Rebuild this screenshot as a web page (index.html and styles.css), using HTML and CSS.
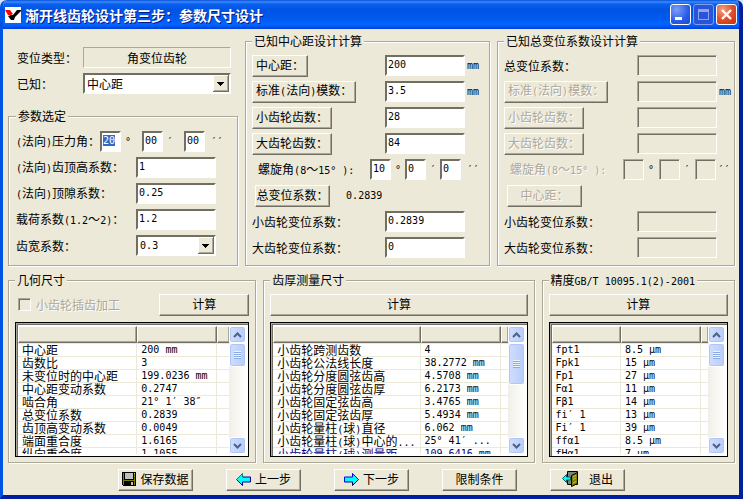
FILE: index.html
```html
<!DOCTYPE html>
<html lang="zh-CN">
<head>
    <meta charset="UTF-8">
    <meta name="viewport" content="width=device-width, initial-scale=1.0">
    <title>渐开线齿轮设计第三步：参数尺寸设计</title>
    <link rel="stylesheet" href="styles.css">
</head>
<body>
    <div class="window">
        <header class="titlebar">
            <svg class="logo" width="16" height="16" viewBox="0 0 16 16">
                <rect width="16" height="16" fill="#fff"/>
                <path d="M0 3h5l3 4-2 1H3z" fill="#f00"/>
                <path d="M3 9l3-1h2l4-5h4v1L10 10l-1 3H6z" fill="#000"/>
            </svg>
            <h1>渐开线齿轮设计第三步：参数尺寸设计</h1>
            <div class="window-buttons">
                <button type="button" class="win-btn" aria-label="最小化">
                    <svg width="19" height="19" viewBox="0 0 19 19"><path d="M4 12h7v3H4z" fill="#fff"/></svg>
                </button>
                <button type="button" class="win-btn dim" aria-label="最大化" disabled>
                    <svg width="19" height="19" viewBox="0 0 19 19"><path d="M4 4h11v11H4zM5 7h9v7H5z" fill="#8ba3f0" fill-rule="evenodd"/></svg>
                </button>
                <button type="button" class="win-btn close" aria-label="关闭">
                    <svg width="19" height="19" viewBox="0 0 19 19"><path d="M5 5l9 9M14 5l-9 9" stroke="#fff" stroke-width="2.4"/></svg>
                </button>
            </div>
        </header>

        <main class="client">
            <div class="top">
                <div class="left">
                    <div class="rows type-rows">
                        <div class="row">
                            <label for="shiftType">变位类型：</label>
                            <input type="text" id="shiftType" class="type" value="角变位齿轮" readonly>
                        </div>
                        <div class="row">
                            <label for="known">已知：</label>
                            <select id="known"><option>中心距</option></select>
                        </div>
                    </div>
                    <fieldset class="params">
                        <legend>参数选定</legend>
                        <div class="rows">
                            <div class="row angle">
                                <label for="pressure"><span class="num">(</span>法向<span class="num">)</span>压力角：</label>
                                <input type="text" id="pressure" class="small" value="20"><span class="unit">°</span>
                                <input type="text" class="small" value="00" aria-label="压力角 分"><span class="unit">′</span>
                                <input type="text" class="small" value="00" aria-label="压力角 秒"><span class="unit">′′</span>
                            </div>
                            <div class="row">
                                <label for="addendum"><span class="num">(</span>法向<span class="num">)</span>齿顶高系数：</label>
                                <input type="text" id="addendum" value="1">
                            </div>
                            <div class="row">
                                <label for="clearance"><span class="num">(</span>法向<span class="num">)</span>顶隙系数：</label>
                                <input type="text" id="clearance" value="0.25">
                            </div>
                            <div class="row">
                                <label for="load">载荷系数<span class="num">(1.2</span>～<span class="num">2)</span>：</label>
                                <input type="text" id="load" value="1.2">
                            </div>
                            <div class="row">
                                <label for="faceWidth">齿宽系数：</label>
                                <select id="faceWidth" class="num"><option>0.3</option></select>
                            </div>
                        </div>
                    </fieldset>
                </div>

                <fieldset class="center">
                    <legend>已知中心距设计计算</legend>
                    <div class="rows">
                        <div class="row">
                            <button type="button">中心距：</button>
                            <input type="text" value="200" aria-label="中心距"><span class="unit">mm</span>
                        </div>
                        <div class="row">
                            <button type="button">标准<span class="num">(</span>法向<span class="num">)</span>模数：</button>
                            <input type="text" value="3.5" aria-label="模数"><span class="unit">mm</span>
                        </div>
                        <div class="row">
                            <button type="button">小齿轮齿数：</button>
                            <input type="text" value="28" aria-label="小齿轮齿数">
                        </div>
                        <div class="row">
                            <button type="button">大齿轮齿数：</button>
                            <input type="text" value="84" aria-label="大齿轮齿数">
                        </div>
                        <div class="row angle">
                            <label for="helix" class="indent">螺旋角<span class="num">(8</span>～<span class="num">15° ):</span></label>
                            <input type="text" id="helix" class="small" value="10"><span class="unit">°</span>
                            <input type="text" class="small" value="0" aria-label="螺旋角 分"><span class="unit">′</span>
                            <input type="text" class="small" value="0" aria-label="螺旋角 秒"><span class="unit">′′</span>
                        </div>
                        <div class="row total">
                            <button type="button">总变位系数：</button>
                            <output class="num">0.2839</output>
                        </div>
                        <div class="row">
                            <label for="x1">小齿轮变位系数：</label>
                            <input type="text" id="x1" value="0.2839">
                        </div>
                        <div class="row">
                            <label for="x2">大齿轮变位系数：</label>
                            <input type="text" id="x2" value="0">
                        </div>
                    </div>
                </fieldset>

                <fieldset class="sum">
                    <legend>已知总变位系数设计计算</legend>
                    <div class="rows">
                        <div class="row">
                            <label for="sumX">总变位系数：</label>
                            <input type="text" id="sumX" disabled>
                        </div>
                        <div class="row">
                            <button type="button" disabled>标准<span class="num">(</span>法向<span class="num">)</span>模数：</button>
                            <input type="text" aria-label="模数" disabled><span class="unit">mm</span>
                        </div>
                        <div class="row">
                            <button type="button" disabled>小齿轮齿数：</button>
                            <input type="text" aria-label="小齿轮齿数" disabled>
                        </div>
                        <div class="row">
                            <button type="button" disabled>大齿轮齿数：</button>
                            <input type="text" aria-label="大齿轮齿数" disabled>
                        </div>
                        <div class="row angle">
                            <label for="sumHelix" class="indent off">螺旋角<span class="num">(8</span>～<span class="num">15° ):</span></label>
                            <input type="text" id="sumHelix" class="small" disabled><span class="unit">°</span>
                            <input type="text" class="small" aria-label="螺旋角 分" disabled><span class="unit">′</span>
                            <input type="text" class="small" aria-label="螺旋角 秒" disabled><span class="unit">′′</span>
                        </div>
                        <div class="row total">
                            <button type="button" disabled>中心距：</button>
                        </div>
                        <div class="row">
                            <label for="sumX1">小齿轮变位系数：</label>
                            <input type="text" id="sumX1" disabled>
                        </div>
                        <div class="row">
                            <label for="sumX2">大齿轮变位系数：</label>
                            <input type="text" id="sumX2" disabled>
                        </div>
                    </div>
                </fieldset>
            </div>

            <div class="results">
                <fieldset>
                    <legend>几何尺寸</legend>
                    <div class="actions">
                        <input type="checkbox" id="shaping" disabled>
                        <label for="shaping" class="off">小齿轮插齿加工</label>
                        <button type="button" class="calc">计算</button>
                    </div>
                    <div class="list">
                        <div class="list-view">
                            <table>
                                <colgroup><col><col class="value"><col class="rest wide"></colgroup>
                                <thead><tr><th></th><th></th><th></th></tr></thead>
                                <tbody>
                                    <tr><td>中心距</td><td>200 mm</td><td></td></tr>
                                    <tr><td>齿数比</td><td>3</td><td></td></tr>
                                    <tr><td>未变位时的中心距</td><td>199.0236 mm</td><td></td></tr>
                                    <tr><td>中心距变动系数</td><td>0.2747</td><td></td></tr>
                                    <tr><td>啮合角</td><td>21° 1′ 38″</td><td></td></tr>
                                    <tr><td>总变位系数</td><td>0.2839</td><td></td></tr>
                                    <tr><td>齿顶高变动系数</td><td>0.0049</td><td></td></tr>
                                    <tr><td>端面重合度</td><td>1.6165</td><td></td></tr>
                                    <tr><td>纵向重合度</td><td>1.1055</td><td></td></tr>
                                </tbody>
                            </table>
                        </div>
                        <div class="scrollbar">
                            <span class="arrow"><svg width="9" height="6" viewBox="0 0 9 6"><path d="M1 5l3.500-3.500L8 5"/></svg></span>
                            <span class="thumb"></span>
                            <span class="arrow down"><svg width="9" height="6" viewBox="0 0 9 6"><path d="M1 1l3.500 3.500L8 1"/></svg></span>
                        </div>
                    </div>
                </fieldset>

                <fieldset>
                    <legend>齿厚测量尺寸</legend>
                    <div class="actions">
                        <button type="button" class="calc wide">计算</button>
                    </div>
                    <div class="list">
                        <div class="list-view">
                            <table>
                                <colgroup><col><col class="value"><col class="rest"></colgroup>
                                <thead><tr><th></th><th></th><th></th></tr></thead>
                                <tbody>
                                    <tr><td>小齿轮跨测齿数</td><td>4</td><td></td></tr>
                                    <tr><td>小齿轮公法线长度</td><td>38.2772 mm</td><td></td></tr>
                                    <tr><td>小齿轮分度圆弦齿高</td><td>4.5708 mm</td><td></td></tr>
                                    <tr><td>小齿轮分度圆弦齿厚</td><td>6.2173 mm</td><td></td></tr>
                                    <tr><td>小齿轮固定弦齿高</td><td>3.4765 mm</td><td></td></tr>
                                    <tr><td>小齿轮固定弦齿厚</td><td>5.4934 mm</td><td></td></tr>
                                    <tr><td>小齿轮量柱<span class="num">(</span>球<span class="num">)</span>直径</td><td>6.062 mm</td><td></td></tr>
                                    <tr><td>小齿轮量柱<span class="num">(</span>球<span class="num">)</span>中心的<span class="num">...</span></td><td>25° 41′ ...</td><td></td></tr>
                                    <tr class="blue"><td>小齿轮量柱<span class="num">(</span>球<span class="num">)</span>测量距</td><td>109.6416 mm</td><td></td></tr>
                                </tbody>
                            </table>
                        </div>
                        <div class="scrollbar">
                            <span class="arrow"><svg width="9" height="6" viewBox="0 0 9 6"><path d="M1 5l3.500-3.500L8 5"/></svg></span>
                            <span class="thumb long"></span>
                            <span class="arrow down"><svg width="9" height="6" viewBox="0 0 9 6"><path d="M1 1l3.500 3.500L8 1"/></svg></span>
                        </div>
                    </div>
                </fieldset>

                <fieldset>
                    <legend>精度<span class="num">GB/T 10095.1(2)-2001</span></legend>
                    <div class="actions">
                        <button type="button" class="calc wide">计算</button>
                    </div>
                    <div class="list">
                        <div class="list-view">
                            <table class="precision">
                                <colgroup><col><col class="value"><col class="rest"></colgroup>
                                <thead><tr><th></th><th></th><th></th></tr></thead>
                                <tbody>
                                    <tr><td>fpt1</td><td>8.5 μm</td><td></td></tr>
                                    <tr><td>Fpk1</td><td>15 μm</td><td></td></tr>
                                    <tr><td>Fp1</td><td>27 μm</td><td></td></tr>
                                    <tr><td>Fα1</td><td>11 μm</td><td></td></tr>
                                    <tr><td>Fβ1</td><td>14 μm</td><td></td></tr>
                                    <tr><td>fi′ 1</td><td>13 μm</td><td></td></tr>
                                    <tr><td>Fi′ 1</td><td>39 μm</td><td></td></tr>
                                    <tr><td>ffα1</td><td>8.5 μm</td><td></td></tr>
                                    <tr><td>fHα1</td><td>7 μm</td><td></td></tr>
                                </tbody>
                            </table>
                        </div>
                        <div class="scrollbar">
                            <span class="arrow"><svg width="9" height="6" viewBox="0 0 9 6"><path d="M1 5l3.500-3.500L8 5"/></svg></span>
                            <span class="thumb"></span>
                            <span class="arrow down"><svg width="9" height="6" viewBox="0 0 9 6"><path d="M1 1l3.500 3.500L8 1"/></svg></span>
                        </div>
                    </div>
                </fieldset>
            </div>

            <div class="footer">
                <button type="button">
                    <svg width="14" height="14" viewBox="0 0 14 14" shape-rendering="crispEdges">
                        <path d="M0 0h14v14H1l-1-1z" fill="#000"/>
                        <path d="M1 1h1v12H1zM12 2h1v11h-1zM2 8h10v1H2z" fill="#808000"/>
                        <path d="M3 1h8v6H3z" fill="#c0c0c0"/>
                        <path d="M12 1h1v1h-1zM9 10h2v3H9z" fill="#c0c0c0"/>
                    </svg>
                    保存数据
                </button>
                <button type="button">
                    <svg width="15" height="13" viewBox="0 0 15 13">
                        <path d="M.5 6.500L6.500.5v3.500h8v5h-8v3.500z" fill="#0ff"/>
                        <path d="M6.500 4V.5l-6 6" fill="none" stroke="#008080"/>
                        <path d="M.5 6.500l6 6V9h8V4h-8" fill="none" stroke="#0000a0"/>
                    </svg>
                    上一步
                </button>
                <button type="button">
                    <svg width="15" height="13" viewBox="0 0 15 13">
                        <path d="M14.500 6.500L8.500.5v3.500h-8v5h8v3.500z" fill="#0ff"/>
                        <path d="M.5 9V4h8V.5l6 6" fill="none" stroke="#00f"/>
                        <path d="M14.500 6.500l-6 6V9h-8" fill="none" stroke="#000080"/>
                    </svg>
                    下一步
                </button>
                <button type="button">限制条件</button>
                <button type="button" class="exit">
                    <svg width="17" height="16" viewBox="0 0 17 16">
                        <path d="M5.500 0.500h10v13h-10z" fill="#808080" stroke="#000"/>
                        <path d="M9.500 4.500l6-3v11l-6 3z" fill="#808000" stroke="#000"/>
                        <path d="M11 6l3-1.500M11 8.500l3-1.500M11 12l3-1.500" stroke="#c0c060"/>
                        <path d="M.5 7.500l4-4v2.500h4v3h-4v2.500z" fill="#0ff" stroke="#006060"/>
                    </svg>
                    退出
                </button>
            </div>
        </main>
    </div>

    <script>
        document.addEventListener('DOMContentLoaded', function() {
            const pressure = document.getElementById('pressure');
            pressure.focus();
            pressure.select();
        });
    </script>
</body>
</html>
```
FILE: styles.css
```css
* {
    box-sizing: border-box;
}
body {
    margin: 0;
    background-color: #d6e3f8;
    color: #000;
    font: 12px/14px "Noto Sans CJK SC", sans-serif;
}
.window {
    display: flex;
    flex-direction: column;
    min-height: 100vh;
    border: solid #0831d9;
    border-width: 0 4px 4px 3px;
    border-color: #0831d9 #001ea0 #001ea0 #0054e3;
    border-radius: 7px 7px 0 0;
    background-color: #ece9d8;
    overflow: hidden;
}
.titlebar {
    display: flex;
    align-items: center;
    height: 29px;
    margin: 0 -4px 0 -3px;
    padding: 0 6px 0 5px;
    background: linear-gradient(#0a4fd6 0, #3a8cff 2px, #0a5fee 4px, #0054e3 10px, #0058ee 18px, #0066ff 24px, #005cf5 26px, #003dd7 29px);
}
.titlebar h1 {
    flex: 1;
    margin: 0 0 0 4px;
    color: #fff;
    font-size: 14px;
    line-height: 20px;
    text-shadow: 1px 1px 0 #0a1883;
}
.window-buttons {
    display: flex;
    gap: 2px;
}
.win-btn {
    width: 21px;
    height: 21px;
    padding: 0;
    border: 1px solid #fff;
    border-radius: 3px;
    background: radial-gradient(circle at 30% 25%, #7b9ff5, #2a5be8 60%, #1c48d0);
}
.win-btn svg {
    display: block;
}
.win-btn.dim {
    border-color: #7f9cf0;
    background: #2a54d8;
}
.win-btn.close {
    background: radial-gradient(circle at 30% 25%, #f0a088, #e0502a 50%, #c03010);
}
.client {
    flex: 1;
    padding: 5px 4px 3px 5px;
}

/* group boxes */
fieldset {
    min-width: 0;
    margin: 0;
    padding: 7px 0 7px 6px;
    border: 1px solid #aca899;
    box-shadow: 1px 1px 0 #fff, inset 1px 1px 0 #fff;
}
legend {
    height: 14px;
    padding: 0 2px;
    background-color: #ece9d8;
}
.num, .unit, input[type="text"] {
    font-family: "DejaVu Sans Mono", "Noto Sans CJK SC", monospace;
    font-size: 10px;
}
.num {
    white-space: pre;
}
.top {
    display: grid;
    grid-template-columns: 230fr 246fr 239fr;
    gap: 7px;
}
.left {
    display: flex;
    flex-direction: column;
}
.rows {
    display: flex;
    flex-direction: column;
    gap: 5px;
}
.row {
    display: flex;
    align-items: center;
    height: 21px;
    padding-right: var(--unit);
}
.row label {
    margin-right: auto;
    white-space: nowrap;
}
.row > button {
    margin-right: auto;
}
.unit {
    width: var(--unit);
    margin-right: calc(var(--unit) * -1);
    padding-left: 2px;
    white-space: nowrap;
}
.angle {
    padding-right: 0;
}
.angle .unit {
    width: var(--step);
    margin-right: 0;
    padding-left: 4px;
}
.angle .unit:last-child {
    width: var(--last);
    padding-left: 6px;
}
.indent {
    padding-left: 6px;
}
.type-rows {
    --unit: 7px;
    margin-bottom: 15px;
    padding: 13px 0 0 9px;
}
.type-rows label {
    width: 66px;
    margin-right: 0;
}
.type-rows select,
.type-rows .type {
    flex: 1;
    width: auto;
    min-width: 0;
}
.params {
    --unit: 21px;
    --step: 21px;
    --last: 32px;
    padding: 8px 0 9px 7px;
}
.center {
    --unit: 24px;
    --step: 14px;
    --last: 28px;
}
.sum {
    --unit: 17px;
    --step: 15px;
    --last: 18px;
}
.sum .angle .unit:last-child {
    padding-left: 2px;
}

/* controls */
input[type="text"],
select {
    width: 80px;
    height: 21px;
    margin: 0;
    padding: 0 1px 2px;
    border: 2px solid;
    border-color: #716f64 #fff #fff #716f64;
    border-radius: 0;
    outline: none;
    background-color: #fff;
    color: #000;
}
input[type="text"].small {
    width: 21px;
}
input[type="text"]:disabled {
    border-width: 1px;
    border-color: #aca899 #fff #fff #aca899;
    box-shadow: inset 1px 1px 0 #716f64;
    background-color: #ece9d8;
}
input[type="text"].type {
    padding-bottom: 0;
    border-width: 1px;
    border-color: #aca899 #fff #fff #aca899;
    background-color: #ece9d8;
    font: 12px/14px "Noto Sans CJK SC", sans-serif;
    text-align: center;
}
input::selection {
    background-color: #316ac5;
    color: #fff;
}
select {
    appearance: none;
    padding: 0 18px 0 2px;
    background: #fff url("data:image/svg+xml,%3Csvg xmlns='http://www.w3.org/2000/svg' width='16' height='17' shape-rendering='crispEdges'%3E%3Cpath d='M0 0h16v17H0z' fill='%23716f64'/%3E%3Cpath d='M0 0h15v16H0z' fill='%23fff'/%3E%3Cpath d='M1 1h14v15H1z' fill='%23aca899'/%3E%3Cpath d='M1 1h13v14H1z' fill='%23ece9d8'/%3E%3Cpath d='M4 7h7v1H4zM5 8h5v1H5zM6 9h3v1H6zM7 10h1v1H7z'/%3E%3C/svg%3E") no-repeat right center;
    font: 12px/14px "Noto Sans CJK SC", sans-serif;
}
select.num {
    font: 10px/14px "DejaVu Sans Mono", monospace;
}
.client button {
    height: 22px;
    padding: 0 3px 2px;
    border: 1px solid;
    border-color: #fff #716f64 #716f64 #fff;
    outline: 0;
    box-shadow: inset -1px -1px 0 #aca899;
    background-color: #ece9d8;
    color: #000;
    font: 12px/14px "Noto Sans CJK SC", sans-serif;
    white-space: nowrap;
}
.client button:disabled,
.off {
    color: #aca899;
    text-shadow: 1px 1px 0 #fff;
}
.total {
    padding-left: 3px;
}
.client .total button {
    width: 75px;
    padding: 0 0 2px;
    margin-right: 16px;
}

/* result lists */
.results {
    display: grid;
    grid-template-columns: 249fr 272fr 194fr;
    gap: 7px;
    margin-top: 7px;
}
.results fieldset {
    padding: 7px 6px 5px;
}
.actions {
    display: flex;
    align-items: center;
    height: 21px;
    margin-bottom: 7px;
}
.actions input {
    appearance: none;
    width: 13px;
    height: 13px;
    margin: 0 5px 0 3px;
    border: 1px solid;
    border-color: #aca899 #fff #fff #aca899;
    box-shadow: inset 1px 1px 0 #716f64;
}
.calc {
    width: 90px;
    margin-left: auto;
}
.calc.wide {
    width: 100%;
}
.list {
    display: flex;
    height: 135px;
    padding: 3px 2px 2px;
    border: 1px solid #000;
    box-shadow: inset 1px 1px 0 #aca899, inset 2px 2px 0 #716f64, inset -1px -1px 0 #fff;
    background-color: #fff;
}
.list-view {
    flex: 1;
    min-width: 0;
    overflow: hidden;
}
table {
    width: 100%;
    table-layout: fixed;
    border-collapse: separate;
    border-spacing: 0;
}
.value {
    width: 80px;
}
.rest {
    width: 7px;
}
.rest.wide {
    width: 12px;
}
th {
    height: 17px;
    padding: 0;
    border: 1px solid;
    border-color: #fff #716f64 #716f64 #fff;
    box-shadow: inset -1px -1px 0 #aca899;
    background-color: #ece9d8;
}
th:last-child {
    border-right: 0;
}
td {
    height: 13px;
    padding: 0 0 0 4px;
    border-right: 1px solid #ece9d8;
    border-bottom: 1px solid #ece9d8;
    line-height: 12px;
    white-space: nowrap;
}
td:last-child {
    padding: 0;
    border-right: 0;
}
tbody tr:first-child td {
    border-top: 1px solid #ece9d8;
    height: 14px;
}
td .num {
    line-height: 1px;
}
td:nth-child(2),
.precision td {
    font-family: "DejaVu Sans Mono", "Noto Sans CJK SC", monospace;
    font-size: 10px;
}
.blue td {
    color: #000080;
}
.scrollbar {
    display: flex;
    flex-direction: column;
    width: 17px;
    background: linear-gradient(90deg, #f1efe9, #fefefb);
}
.arrow, .thumb {
    display: flex;
    align-items: center;
    justify-content: center;
    height: 17px;
    border: 1px solid #fff;
    border-radius: 3px;
    box-shadow: inset 0 0 0 1px #b0c6f5;
    background: linear-gradient(90deg, #d0defd, #b8cdfb);
}
.arrow.down {
    margin-top: auto;
}
.arrow path {
    fill: none;
    stroke: #4d6185;
    stroke-width: 2;
}
.thumb {
    height: 24px;
}
.thumb::before {
    content: "";
    width: 7px;
    height: 8px;
    background: repeating-linear-gradient(#eef4fe 0 1px, #8caae6 1px 2px);
}
.thumb.long {
    height: 42px;
}

.footer {
    display: flex;
    justify-content: center;
    gap: 33px;
    margin-top: 6px;
}
.footer button {
    display: flex;
    align-items: center;
    justify-content: center;
    gap: 4px;
    width: 75px;
}
.footer .exit {
    gap: 10px;
}
```
